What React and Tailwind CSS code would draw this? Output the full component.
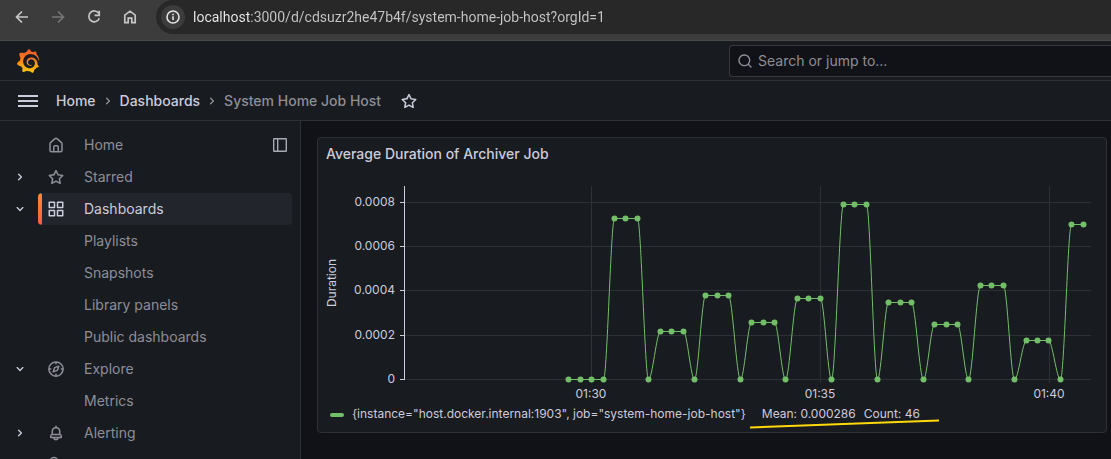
import React from "react";
import { SiGrafana } from "react-icons/si";

const ICONS = {
  home: "M20,8h0L14,2.74a3,3,0,0,0-4,0L4,8a3,3,0,0,0-1,2.26V19a3,3,0,0,0,3,3H18a3,3,0,0,0,3-3V10.25A3,3,0,0,0,20,8ZM14,20H10V15a1,1,0,0,1,1-1h2a1,1,0,0,1,1,1Zm5-1a1,1,0,0,1-1,1H16V15a3,3,0,0,0-3-3H11a3,3,0,0,0-3,3v5H6a1,1,0,0,1-1-1V10.25a1,1,0,0,1,.34-.75l6-5.25a1,1,0,0,1,1.32,0l6,5.25a1,1,0,0,1,.34.75Z",
  star: "M22,9.67A1,1,0,0,0,21.14,9l-5.69-.83L12.9,3a1,1,0,0,0-1.8,0L8.55,8.16,2.86,9a1,1,0,0,0-.81.68,1,1,0,0,0,.25,1l4.13,4-1,5.68A1,1,0,0,0,6.9,21.44L12,18.77l5.1,2.67a.93.93,0,0,0,.46.12,1,1,0,0,0,.59-.19,1,1,0,0,0,.4-1l-1-5.68,4.13-4A1,1,0,0,0,22,9.67Zm-6.15,4a1,1,0,0,0-.29.88l.72,4.2-3.76-2a1.06,1.06,0,0,0-.94,0l-3.76,2,.72-4.2a1,1,0,0,0-.29-.88l-3-3,4.21-.61a1,1,0,0,0,.76-.55L12,5.7l1.88,3.82a1,1,0,0,0,.76.55l4.21.61Z",
  apps: "M10,13H3a1,1,0,0,0-1,1v7a1,1,0,0,0,1,1h7a1,1,0,0,0,1-1V14A1,1,0,0,0,10,13ZM9,20H4V15H9ZM21,2H14a1,1,0,0,0-1,1v7a1,1,0,0,0,1,1h7a1,1,0,0,0,1-1V3A1,1,0,0,0,21,2ZM20,9H15V4h5Zm1,4H14a1,1,0,0,0-1,1v7a1,1,0,0,0,1,1h7a1,1,0,0,0,1-1V14A1,1,0,0,0,21,13Zm-1,7H15V15h5ZM10,2H3A1,1,0,0,0,2,3v7a1,1,0,0,0,1,1h7a1,1,0,0,0,1-1V3A1,1,0,0,0,10,2ZM9,9H4V4H9Z",
  bell: "M18,13.18V10a6,6,0,0,0-5-5.91V3a1,1,0,0,0-2,0V4.09A6,6,0,0,0,6,10v3.18A3,3,0,0,0,4,16v2a1,1,0,0,0,1,1H8.14a4,4,0,0,0,7.72,0H19a1,1,0,0,0,1-1V16A3,3,0,0,0,18,13.18ZM8,10a4,4,0,0,1,8,0v3H8Zm4,10a2,2,0,0,1-1.72-1h3.44A2,2,0,0,1,12,20Zm6-3H6V16a1,1,0,0,1,1-1H17a1,1,0,0,1,1,1Z",
  search: "M21.71,20.29,18,16.61A9,9,0,1,0,16.61,18l3.68,3.68a1,1,0,0,0,1.42,0A1,1,0,0,0,21.71,20.29ZM11,18a7,7,0,1,1,7-7A7,7,0,0,1,11,18Z",
  right: "M14.83,11.29,10.59,7.05a1,1,0,0,0-1.42,0,1,1,0,0,0,0,1.41L12.71,12,9.17,15.54a1,1,0,0,0,0,1.41,1,1,0,0,0,.71.29,1,1,0,0,0,.71-.29l4.24-4.24A1,1,0,0,0,14.83,11.29Z",
  down: "M17,9.17a1,1,0,0,0-1.41,0L12,12.71,8.46,9.17a1,1,0,0,0-1.41,0,1,1,0,0,0,0,1.42l4.24,4.24a1,1,0,0,0,1.42,0L17,10.59A1,1,0,0,0,17,9.17Z",
};

function Icon({ name, className = "size-4" }) {
  return (
    <svg viewBox="0 0 24 24" fill="currentColor" aria-hidden="true" className={className}>
      <path d={ICONS[name]} />
    </svg>
  );
}

function CompassIcon() {
  return (
    <svg viewBox="0 0 24 24" fill="none" stroke="currentColor" strokeWidth="2" strokeLinejoin="round" strokeLinecap="round" aria-hidden="true" className="size-[18px]">
      <circle cx="12" cy="12" r="9.500" />
      <path d="M15.800 8.200l-2 5.600-5.600 2 2-5.600z" />
      <path d="M12 3v2M12 19v2M3 12h2M19 12h2" />
    </svg>
  );
}

function ConnectionsIcon() {
  return (
    <svg viewBox="0 0 18 18" fill="none" stroke="currentColor" strokeWidth="1.500" aria-hidden="true" className="size-[18px]">
      <circle cx="7" cy="5" r="3.500" />
      <path d="M10 8l5 7M3 15l3-6" />
    </svg>
  );
}

function BrowserBar() {
  return (
    <div className="flex h-[41px] shrink-0 border-b border-[#4b4b4b] bg-[#3c3c3c]">
      <div className="flex h-[34px] w-[156px] shrink-0 items-center gap-5 pl-[14px]">
        <button aria-label="Back" className="text-[#c7c7c7]">
          <svg viewBox="0 0 16 16" fill="none" stroke="currentColor" strokeWidth="1.700" className="size-4">
            <path d="M14 8H3M8 2.500L2.500 8L8 13.500" />
          </svg>
        </button>
        <button aria-label="Forward" className="text-[#757575]">
          <svg viewBox="0 0 16 16" fill="none" stroke="currentColor" strokeWidth="1.700" className="size-4">
            <path d="M2 8h11M8 2.500L13.500 8L8 13.500" />
          </svg>
        </button>
        <button aria-label="Reload" className="text-[#c7c7c7]">
          <svg viewBox="0 0 16 16" fill="none" stroke="currentColor" strokeWidth="1.700" className="size-4">
            <path d="M12.700 4.300A5.400 5.400 0 1 0 13.300 9.300" />
            <path d="M13.200 1.800v4.600H8.600" />
          </svg>
        </button>
        <button aria-label="Home page" className="text-[#c7c7c7]">
          <svg viewBox="0 0 16 16" fill="none" stroke="currentColor" strokeWidth="1.700" className="size-4">
            <path d="M2.800 6.200L8 2.200l5.200 4v7.500h-3.400V9.200H6.200v4.500H2.800z" />
          </svg>
        </button>
      </div>
      <div className="flex h-[34px] grow items-center gap-2 rounded-l-full bg-[#282828] pl-[5px]">
        <button aria-label="Site information" className="flex size-6 shrink-0 items-center justify-center rounded-full bg-[#3c3c3c] text-[#e3e3e3]">
          <svg viewBox="0 0 16 16" fill="none" stroke="currentColor" strokeWidth="1.600" className="size-4">
            <circle cx="8" cy="8" r="6" />
            <path d="M8 7.200v3.800M8 4.700v1.500" />
          </svg>
        </button>
        <input
          aria-label="Address"
          defaultValue="localhost:3000/d/cdsuzr2he47b4f/system-home-job-host?orgId=1"
          className="min-w-0 grow bg-[linear-gradient(to_right,#ededed_56px,#c7c7c7_56px)] bg-clip-text font-['Roboto',sans-serif] text-[14px] text-transparent outline-none"
        />
      </div>
    </div>
  );
}

function TopBar() {
  return (
    <div className="flex h-10 shrink-0 items-center border-b border-[#2d3035] bg-[#181b1f] pl-4">
      <svg width="0" height="0" className="absolute" aria-hidden="true">
        <linearGradient id="logo-fill" x1="0" y1="0" x2="0" y2="1">
          <stop offset="0" stopColor="#f05a28" />
          <stop offset="0.4" stopColor="#f47b20" />
          <stop offset="1" stopColor="#fbca0a" />
        </linearGradient>
      </svg>
      <a href="#home" aria-label="Grafana">
        <SiGrafana fill="url(#logo-fill)" className="size-6" />
      </a>
      <label className="ml-auto flex h-8 w-[382px] items-center gap-[5px] rounded-l-sm border border-r-0 border-[#36383e] bg-[#111217] pl-[7px] text-[#8e8e99]">
        <Icon name="search" />
        <input aria-label="Search or jump to..." placeholder="Search or jump to..." className="min-w-0 grow bg-transparent text-[14px] outline-none placeholder:text-[#8e8e99]" />
      </label>
    </div>
  );
}

function Breadcrumbs() {
  return (
    <div className="flex h-10 shrink-0 items-center border-b border-[#2d3035] bg-[#181b1f] pl-[18px] text-[14px] text-[#ccccdc]">
      <button aria-label="Toggle menu" className="mr-[18px] flex w-5 flex-col gap-[3px]">
        <span className="h-[2px] bg-current" />
        <span className="h-[2px] bg-current" />
        <span className="h-[2px] bg-current" />
      </button>
      <nav aria-label="Breadcrumbs" className="flex items-center gap-1 font-medium">
        <a href="#home">Home</a>
        <Icon name="right" className="size-4 text-[#8e8e99]" />
        <a href="#dashboards">Dashboards</a>
        <Icon name="right" className="size-4 text-[#8e8e99]" />
        <span className="text-[#8e8e99]">System Home Job Host</span>
      </nav>
      <button aria-label="Mark as favorite" className="ml-[19px]">
        <Icon name="star" className="size-[18px]" />
      </button>
    </div>
  );
}

const NAV = [
  { label: "Home", icon: <Icon name="home" className="size-[18px]" />, dock: true },
  { label: "Starred", icon: <Icon name="star" className="size-[18px]" />, arrow: "right" },
  { label: "Dashboards", icon: <Icon name="apps" className="size-[18px]" />, arrow: "down", active: true },
  { label: "Playlists" },
  { label: "Snapshots" },
  { label: "Library panels" },
  { label: "Public dashboards" },
  { label: "Explore", icon: <CompassIcon />, arrow: "down" },
  { label: "Metrics" },
  { label: "Alerting", icon: <Icon name="bell" className="size-[18px]" />, arrow: "right" },
  { label: "", icon: <ConnectionsIcon /> },
];

function Sidebar() {
  return (
    <nav aria-label="Main" className="w-[301px] shrink-0 overflow-hidden border-r border-[#2d3035] bg-[#181b1f] pt-2 pr-2 text-[14px] leading-5 text-[#8e8e99]">
      <ul>
        {NAV.map((item, i) => (
          <li key={i} className="flex h-8 items-center">
            <div className="flex w-[38px] shrink-0 justify-center pl-[2px] text-[#ccccdc]">
              {item.arrow && (
                <button aria-label={"Toggle " + item.label}>
                  <Icon name={item.arrow} />
                </button>
              )}
            </div>
            <div className={item.active ? "flex h-8 grow items-center overflow-hidden rounded-sm bg-[#22252b] text-[#ccccdc]" : "flex h-8 grow items-center"}>
              <span className={item.active ? "h-8 w-1 rounded-sm bg-linear-to-b from-[#ff8833] to-[#f55f3e]" : "w-1"} />
              <a href={"#" + item.label} aria-label={item.label || "Connections"} className="flex grow items-center gap-[19px] pl-[5px]">
                <span className="size-[18px]">{item.icon}</span>
                {item.label}
              </a>
              {item.dock && (
                <button aria-label="Undock menu" className="mr-1 text-[#a9a9b5]">
                  <svg viewBox="0 0 16 16" fill="none" stroke="currentColor" strokeWidth="1.400" className="size-4">
                    <rect x="1.700" y="1.700" width="12.600" height="12.600" rx="0.500" />
                    <path d="M5.700 2v12" />
                  </svg>
                </button>
              )}
            </div>
          </li>
        ))}
      </ul>
    </nav>
  );
}

const BASE = 209;
const GROUPS = [[3, 48], [3, 161], [3, 125], [3, 152], [3, 128], [3, 34], [3, 132], [3, 154], [3, 115], [3, 170], [2, 54]];
const LEVELS = [BASE, BASE, BASE];
GROUPS.forEach(([count, y]) => {
  LEVELS.push(BASE);
  for (let k = 0; k < count; k++) LEVELS.push(y);
});
const POINTS = LEVELS.map((y, i) => [Math.floor(250.7 + i * 11.435) + 0.5, y + 0.5]);
const LINE = POINTS.map(([x, y], i) => {
  if (i === 0) return `M${x} ${y}`;
  const [px, py] = POINTS[i - 1];
  const third = (x - px) / 3;
  return `C${px + third} ${py} ${x - third} ${y} ${x} ${y}`;
}).join("");
const Y_TICKS = [[32, "0.0008"], [76, "0.0006"], [120, "0.0004"], [165, "0.0002"], [209, "0"]];
const X_TICKS = [[273, "01:30"], [502, "01:35"], [731, "01:40"]];

function Chart() {
  return (
    <svg viewBox="0 0 788 234" role="img" aria-label="Duration over time" className="block w-full font-['Inter',sans-serif] text-[12px]">
      {Y_TICKS.map(([y]) => (
        <rect key={y} x="87" y={y} width="686" height="1" fill="#2d3035" />
      ))}
      {X_TICKS.map(([x]) => (
        <rect key={x} x={x} y="16" width="1" height="197" fill="#2d3035" />
      ))}
      <rect x="86" y="16" width="1" height="194" fill="#ccccdc" />
      {Y_TICKS.map(([y, label]) => (
        <g key={label} fill="#ccccdc">
          <rect x="82" y={y} width="4" height="1" />
          <text x="77" y={y + 4} textAnchor="end">{label}</text>
        </g>
      ))}
      {X_TICKS.map(([x, label]) => (
        <text key={label} x={x} y="228" textAnchor="middle" fill="#ccccdc">{label}</text>
      ))}
      <text transform="translate(18 113) rotate(-90)" textAnchor="middle" fill="#ccccdc">Duration</text>
      <path d={LINE} fill="none" stroke="#73bf69" strokeWidth="1" />
      {POINTS.map(([x, y]) => (
        <circle key={x} cx={x} cy={y} r="3" fill="#73bf69" />
      ))}
    </svg>
  );
}

function Panel() {
  return (
    <section className="relative rounded-sm border border-[#2d3035] bg-[#181b1f] text-[#ccccdc]">
      <h2 className="flex h-8 items-center px-2 text-[14px] leading-5 font-medium">Average Duration of Archiver Job</h2>
      <Chart />
      <div className="flex h-7 items-start pl-3 text-[12px] leading-5">
        <span className="mt-[9px] mr-2 h-1 w-[14px] rounded-full bg-[#73bf69]" />
        <button className="mr-4">{'{instance="host.docker.internal:1903", job="system-home-job-host"}'}</button>
        <span className="mr-2">Mean: 0.000286</span>
        <span>Count: 46</span>
      </div>
      <svg viewBox="0 0 189 12" aria-hidden="true" className="absolute bottom-[2px] left-[432px] h-3 w-[189px]">
        <path d="M0 9.500L189 2.500" stroke="#ffd90a" strokeWidth="2" />
      </svg>
    </section>
  );
}

export default function App() {
  return (
    <div className="flex h-screen flex-col overflow-hidden bg-[#111217] font-['Inter',sans-serif]">
      <BrowserBar />
      <TopBar />
      <Breadcrumbs />
      <div className="flex min-h-0 grow">
        <Sidebar />
        <main className="min-w-0 grow pt-4 pr-1 pl-4">
          <Panel />
        </main>
      </div>
    </div>
  );
}
